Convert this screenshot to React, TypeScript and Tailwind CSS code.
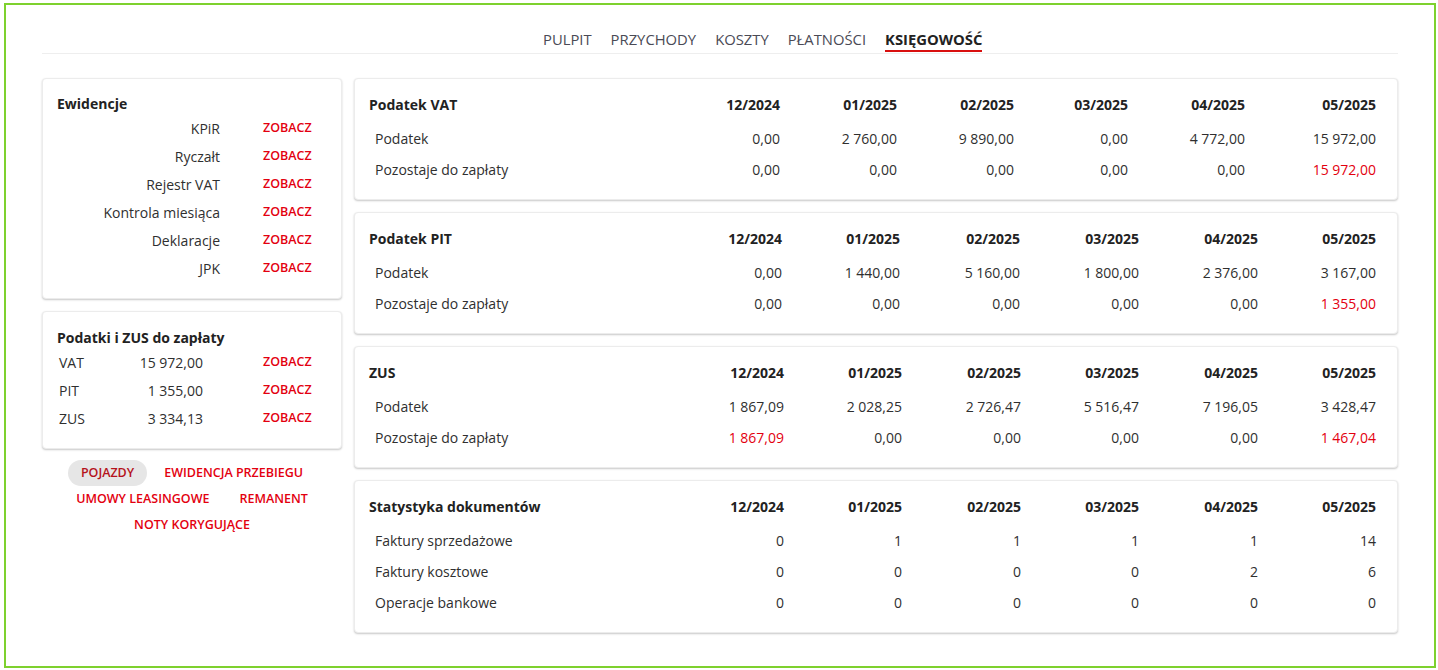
import React from "react";

const RED = "text-[#e3000f]";

type Row = { label: string; values: string[]; red?: number[] };
type Card = { title: string; cols: string; rows: Row[] };

const months = ["12/2024", "01/2025", "02/2025", "03/2025", "04/2025", "05/2025"];

const cards: Card[] = [
  {
    title: "Podatek VAT",
    cols: "grid-cols-[1fr_118px_117px_117px_114px_117px_131px]",
    rows: [
      { label: "Podatek", values: ["0,00", "2 760,00", "9 890,00", "0,00", "4 772,00", "15 972,00"] },
      { label: "Pozostaje do zapłaty", values: ["0,00", "0,00", "0,00", "0,00", "0,00", "15 972,00"], red: [5] },
    ],
  },
  {
    title: "Podatek PIT",
    cols: "grid-cols-[1fr_118px_118px_120px_119px_119px_118px]",
    rows: [
      { label: "Podatek", values: ["0,00", "1 440,00", "5 160,00", "1 800,00", "2 376,00", "3 167,00"] },
      { label: "Pozostaje do zapłaty", values: ["0,00", "0,00", "0,00", "0,00", "0,00", "1 355,00"], red: [5] },
    ],
  },
  {
    title: "ZUS",
    cols: "grid-cols-[1fr_118px_118px_119px_118px_119px_118px]",
    rows: [
      { label: "Podatek", values: ["1 867,09", "2 028,25", "2 726,47", "5 516,47", "7 196,05", "3 428,47"] },
      { label: "Pozostaje do zapłaty", values: ["1 867,09", "0,00", "0,00", "0,00", "0,00", "1 467,04"], red: [0, 5] },
    ],
  },
  {
    title: "Statystyka dokumentów",
    cols: "grid-cols-[1fr_118px_118px_119px_118px_119px_118px]",
    rows: [
      { label: "Faktury sprzedażowe", values: ["0", "1", "1", "1", "1", "14"] },
      { label: "Faktury kosztowe", values: ["0", "0", "0", "0", "2", "6"] },
      { label: "Operacje bankowe", values: ["0", "0", "0", "0", "0", "0"] },
    ],
  },
];

const cardCls =
  "bg-white border border-[#ececec] rounded-[4px] shadow-[0_1px_2px_rgba(0,0,0,0.22)]";

function Zobacz() {
  return <span className={`text-[12.5px] font-semibold ${RED} uppercase`}>Zobacz</span>;
}

export default function App() {
  const ewid = ["KPiR", "Ryczałt", "Rejestr VAT", "Kontrola miesiąca", "Deklaracje", "JPK"];
  const taxes = [
    ["VAT", "15 972,00"],
    ["PIT", "1 355,00"],
    ["ZUS", "3 334,13"],
  ];
  const links = ["Pojazdy", "Ewidencja przebiegu", "Umowy leasingowe", "Remanent", "Noty korygujące"];
  return (
    <div className="bg-white w-[1438px] h-[670px] pt-[3px] pl-[4px] text-[#2f2f2f] font-['Open_Sans',sans-serif]">
      <div className="w-[1432px] h-[665px] border-2 border-[#7ed12e] px-[36px]">
        <nav className="flex gap-[19px] pl-[501px] pt-[24px] pb-px border-b border-[#eeeeee] text-[14.8px] leading-[21px]">
          {["PULPIT", "PRZYCHODY", "KOSZTY", "PŁATNOŚCI"].map((t) => (
            <span key={t} className="text-[#4a4a55] pb-[2px]">
              {t}
            </span>
          ))}
          <span className="font-bold text-[#222] border-b-2 border-[#d9100f]">KSIĘGOWOŚĆ</span>
        </nav>

        <div className="flex gap-[12px] mt-[24px]">
          <div className="w-[300px] shrink-0">
            <div className={`${cardCls} pt-[15px] pb-[16px] pl-[14px] pr-[15px]`}>
              <div className="text-[14px] font-bold leading-[20px] text-[#222]">Ewidencje</div>
              {ewid.map((e) => (
                <div key={e} className="flex items-center h-[28px] text-[14px]">
                  <span className="w-[163px] text-right">{e}</span>
                  <span className="ml-[43px] -mt-[2px]">
                    <Zobacz />
                  </span>
                </div>
              ))}
            </div>
            <div className={`${cardCls} mt-[12px] pt-[16px] pb-[16px] pl-[14px] pr-[15px]`}>
              <div className="text-[14px] font-bold leading-[20px] text-[#222]">Podatki i ZUS do zapłaty</div>
              {taxes.map(([l, v]) => (
                <div key={l} className="flex items-center h-[28px] text-[14px]">
                  <span className="w-[60px] pl-[2px]">{l}</span>
                  <span className="w-[86px] text-right">{v}</span>
                  <span className="ml-[60px] -mt-[2px]">
                    <Zobacz />
                  </span>
                </div>
              ))}
            </div>
            <div className="mt-[11px] flex flex-wrap justify-center gap-x-[4px] px-[8px]">
              {links.map((l, i) => (
                <span
                  key={l}
                  className={`h-[26px] flex items-center px-[13px] pt-[1px] rounded-full text-[12.5px] font-semibold uppercase ${
                    i === 0 ? "bg-[#e6e6e6] text-[#b5121b]" : RED
                  }`}
                >
                  {l}
                </span>
              ))}
            </div>
          </div>

          <div className="flex-1 flex flex-col gap-[12px]">
            {cards.map((c) => (
              <div key={c.title} className={`${cardCls} pt-[16px] pb-[14px] pl-[14px] pr-[21px]`}>
                <div className={`grid ${c.cols} text-[14px] leading-[20px] font-bold text-[#222] mb-[8px]`}>
                  <span>{c.title}</span>
                  {months.map((m) => (
                    <span key={m} className="text-right">
                      {m}
                    </span>
                  ))}
                </div>
                {c.rows.map((r) => (
                  <div key={r.label} className={`grid ${c.cols} items-center h-[31px] text-[14px]`}>
                    <span className="pl-[6px]">{r.label}</span>
                    {r.values.map((v, i) => (
                      <span key={i} className={`text-right ${r.red && r.red.includes(i) ? RED : ""}`}>
                        {v}
                      </span>
                    ))}
                  </div>
                ))}
              </div>
            ))}
          </div>
        </div>
      </div>
    </div>
  );
}
